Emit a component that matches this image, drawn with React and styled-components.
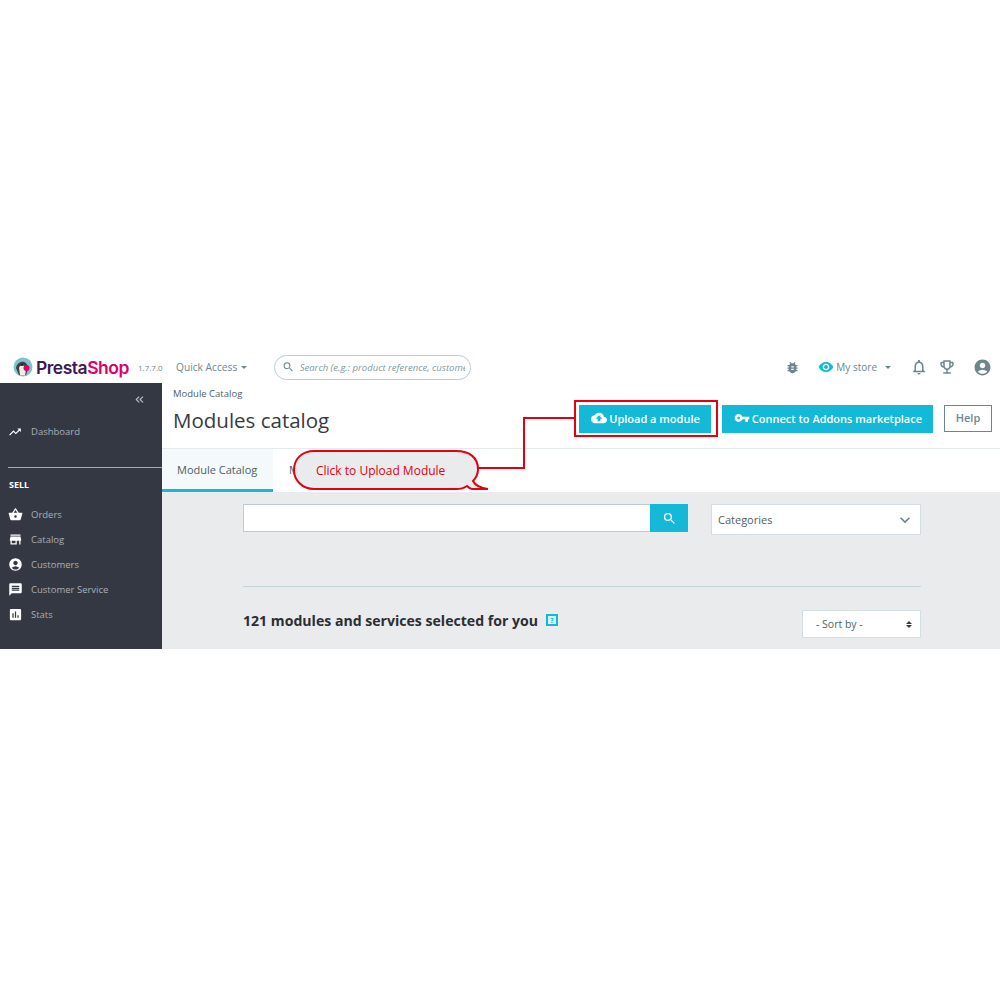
import React from 'react';
import styled, { createGlobalStyle } from 'styled-components';
import {
  MdAccountCircle,
  MdAssessment,
  MdBugReport,
  MdCloudUpload,
  MdExpandMore,
  MdMessage,
  MdNotificationsNone,
  MdOutlineEmojiEvents,
  MdSearch,
  MdShoppingBasket,
  MdStore,
  MdTrendingUp,
  MdVisibility,
  MdVpnKey,
} from 'react-icons/md';
import { ChevronsLeft } from 'lucide-react';

const GlobalStyle = createGlobalStyle`
  html, body {
    margin: 0;
    background: #fff;
    font-family: "Open Sans", "Liberation Sans", sans-serif;
  }
  * { box-sizing: border-box; }
`;

const Page = styled.div`
  position: relative;
  width: 1000px;
  height: 1000px;
  padding-top: 354px;
  overflow: hidden;
`;

const TopBar = styled.header`
  display: flex;
  align-items: center;
  height: 29px;
  padding: 0 8px 3px 13px;
`;

const Logo = styled.div`
  display: flex;
  align-items: center;
  width: 125px;
`;

const LogoName = styled.span`
  margin-left: 3px;
  font-family: "Inter", "Open Sans", sans-serif;
  font-size: 17.5px;
  font-weight: 600;
  letter-spacing: -0.5px;
  color: #3b1a5c;

  b {
    font-weight: 600;
    color: #df0067;
  }
`;

const Version = styled.span`
  width: 38px;
  font-size: 8px;
  color: #6c868e;
`;

const QuickAccess = styled.span`
  display: flex;
  align-items: center;
  width: 98px;
  font-size: 10.2px;
  color: #6c868e;
`;

const Caret = styled.i`
  width: 0;
  height: 0;
  margin-left: ${(p) => p.$gap || 4}px;
  border-top: 3px solid #6c868e;
  border-left: 3.5px solid transparent;
  border-right: 3.5px solid transparent;
`;

const SearchPill = styled.div`
  display: flex;
  align-items: center;
  gap: 5px;
  width: 197px;
  height: 25px;
  padding: 0 5px 0 7px;
  border: 1px solid #bbcdd2;
  border-radius: 13px;
  color: #6c868e;
  overflow: hidden;
`;

const SearchHint = styled.span`
  font-size: 9.5px;
  font-style: italic;
  white-space: nowrap;
  overflow: hidden;
  color: #7f979e;
`;

const TopRight = styled.div`
  display: flex;
  align-items: center;
  margin-left: auto;
  color: #6c868e;
`;

const StoreLink = styled.span`
  display: flex;
  align-items: center;
  gap: 2px;
  margin: 0 19px 0 18px;
  font-size: 10px;
  color: #6c868e;
`;

const TopIcon = styled.span`
  display: flex;
  margin-left: ${(p) => p.$gap || 0}px;
  color: ${(p) => p.$color || '#6c868e'};
`;

const Body = styled.div`
  display: flex;
  height: 266px;
`;

const Sidebar = styled.aside`
  flex: 0 0 162px;
  padding-top: 10px;
  background: #343843;
  color: #bebebe;
`;

const Collapse = styled.div`
  display: flex;
  justify-content: flex-end;
  height: 14px;
  padding-right: 16px;
  color: #bebebe;
`;

const NavList = styled.nav`
  display: flex;
  flex-direction: column;
  gap: 10px;
`;

const NavItem = styled.a`
  display: flex;
  align-items: center;
  gap: 8px;
  height: 15px;
  padding-left: 8px;
  font-size: 9.5px;
  color: #a9afb6;

  svg {
    flex: none;
    color: #fff;
  }
`;

const DashboardItem = styled(NavItem)`
  gap: 9px;
  margin-top: 17px;
`;

const SideRule = styled.hr`
  height: 1px;
  margin: 28px 0 0 8px;
  border: 0;
  background: #a3abb0;
`;

const SideTitle = styled.h4`
  margin: 11px 0 16px 9px;
  font-size: 9px;
  line-height: 12px;
  font-weight: 700;
  color: #fff;
`;

const Main = styled.main`
  flex: 1;
  display: flex;
  flex-direction: column;
  min-width: 0;
`;

const PageHead = styled.div`
  display: flex;
  justify-content: space-between;
  height: 66px;
  padding: 4px 8px 0 11px;
  border-bottom: 1px solid #e5eaec;
`;

const Breadcrumb = styled.div`
  font-size: 9.5px;
  line-height: 13px;
  color: #4d5f66;
`;

const Title = styled.h1`
  margin: 5px 0 0;
  font-size: 20.5px;
  line-height: 30px;
  font-weight: 400;
  color: #363a41;
`;

const Actions = styled.div`
  display: flex;
  gap: 11px;
  padding-top: 18px;
`;

const Button = styled.button`
  display: flex;
  align-items: center;
  gap: 2px;
  height: 28px;
  padding: 0 11px 2px 12px;
  border: 0;
  background: #14b9d7;
  color: #fff;
  font-family: inherit;
  font-size: 11px;
  font-weight: 600;
`;

const HelpButton = styled.button`
  width: 48px;
  height: 27px;
  padding: 0 0 2px;
  border: 1px solid #6c868e;
  background: #fff;
  color: #6c868e;
  font-family: inherit;
  font-size: 11px;
  font-weight: 600;
`;

const Tabs = styled.div`
  display: flex;
  height: 43px;
`;

const Tab = styled.div`
  display: flex;
  align-items: center;
  width: 111px;
  padding-left: ${(p) => (p.$active ? 15 : 16)}px;
  border-bottom: 3px solid ${(p) => (p.$active ? '#14b9d7' : 'transparent')};
  background: ${(p) => (p.$active ? '#f4f9fb' : '#fff')};
  font-size: 11px;
  white-space: nowrap;
  color: #4d5f66;
`;

const Content = styled.section`
  flex: 1;
  padding: 12px 79px 0 81px;
  background: #eaebec;
`;

const FilterRow = styled.div`
  display: flex;
  align-items: flex-start;
`;

const SearchInput = styled.div`
  width: 407px;
  height: 28px;
  border: 1px solid #bbcdd2;
  border-right: 0;
  background: #fff;
`;

const SearchButton = styled.div`
  display: flex;
  align-items: center;
  justify-content: center;
  width: 38px;
  height: 28px;
  background: #14b9d7;
  color: #fff;
`;

const Select = styled.div`
  display: flex;
  align-items: center;
  justify-content: space-between;
  width: ${(p) => p.$width}px;
  height: ${(p) => p.$height}px;
  margin-left: ${(p) => p.$gap || 0}px;
  padding: 0 ${(p) => p.$padRight}px 0 ${(p) => p.$padLeft}px;
  border: 1px solid #d3dee2;
  background: #fff;
  font-size: ${(p) => p.$size || 11}px;
  color: #4d5f66;
`;

const Divider = styled.hr`
  height: 1px;
  margin: 51px 0 0;
  border: 0;
  background: #c5d5d8;
`;

const ResultRow = styled.div`
  display: flex;
  align-items: center;
  justify-content: space-between;
  margin-top: 23px;
`;

const ResultTitle = styled.h2`
  display: flex;
  align-items: center;
  gap: 8px;
  margin: 0;
  padding-bottom: 8px;
  font-size: 14.1px;
  font-weight: 700;
  color: #2b2e33;
`;

const HelpBadge = styled.span`
  display: flex;
  align-items: center;
  justify-content: center;
  width: 12px;
  height: 12px;
  border: 2px solid #14b9d7;
  background: #d9f3f8;
  font-size: 7px;
  font-weight: 700;
  color: #14b9d7;
`;

const SortArrows = styled.span`
  display: flex;
  flex-direction: column;
  gap: 1px;

  i {
    width: 0;
    height: 0;
    border-left: 3px solid transparent;
    border-right: 3px solid transparent;
  }

  i:first-child { border-bottom: 3px solid #363a41; }
  i:last-child { border-top: 3px solid #363a41; }
`;

/* annotation layer drawn over the screenshot */
const UploadHighlight = styled.div`
  position: absolute;
  left: 574px;
  top: 400px;
  width: 144px;
  height: 37px;
  border: 2px solid #e3000f;
`;

const Connector = styled.svg`
  position: absolute;
  left: 470px;
  top: 410px;
  width: 110px;
  height: 70px;
`;

const BubbleShape = styled.svg`
  position: absolute;
  left: 290px;
  top: 446px;
  width: 204px;
  height: 48px;
`;

const BubbleText = styled.span`
  position: absolute;
  left: 316px;
  top: 462px;
  font-family: "Open Sans", sans-serif;
  font-size: 12px;
  line-height: 18px;
  color: #e3000f;
`;

const Puffin = () => (
  <svg width="20" height="20" viewBox="0 0 20 20">
    <circle cx="10" cy="10" r="9.5" fill="#7fc4c9" />
    <path d="M3 11c1-5 5-7 8-6 3 1 4 4 4 7l-2 6H6z" fill="#3b3f4a" />
    <path d="M6 11c1-3 4-3 6-1 1 2 1 5 0 8H7z" fill="#f3efe6" />
    <circle cx="13.5" cy="11" r="3" fill="#df0067" />
    <circle cx="9" cy="8" r="1" fill="#222" />
  </svg>
);

const navItems = [
  { label: 'Orders', Icon: MdShoppingBasket },
  { label: 'Catalog', Icon: MdStore },
  { label: 'Customers', Icon: MdAccountCircle },
  { label: 'Customer Service', Icon: MdMessage },
  { label: 'Stats', Icon: MdAssessment },
];

const App = () => {
  return (
    <Page>
      <GlobalStyle />
      <TopBar>
        <Logo>
          <Puffin />
          <LogoName>
            Presta<b>Shop</b>
          </LogoName>
        </Logo>
        <Version>1.7.7.0</Version>
        <QuickAccess>
          Quick Access <Caret />
        </QuickAccess>
        <SearchPill>
          <MdSearch size={16} />
          <SearchHint>Search (e.g.: product reference, customer name…)</SearchHint>
        </SearchPill>
        <TopRight>
          <TopIcon>
            <MdBugReport size={15} />
          </TopIcon>
          <StoreLink>
            <TopIcon $color="#14b9d7">
              <MdVisibility size={16} />
            </TopIcon>
            My store
            <Caret $gap={6} />
          </StoreLink>
          <TopIcon>
            <MdNotificationsNone size={18} />
          </TopIcon>
          <TopIcon $gap={10}>
            <MdOutlineEmojiEvents size={18} />
          </TopIcon>
          <TopIcon $gap={17}>
            <MdAccountCircle size={19} />
          </TopIcon>
        </TopRight>
      </TopBar>
      <Body>
        <Sidebar>
          <Collapse>
            <ChevronsLeft size={13} />
          </Collapse>
          <DashboardItem>
            <MdTrendingUp size={14} />
            Dashboard
          </DashboardItem>
          <SideRule />
          <SideTitle>SELL</SideTitle>
          <NavList>
            {navItems.map(({ label, Icon }) => (
              <NavItem key={label}>
                <Icon size={15} />
                {label}
              </NavItem>
            ))}
          </NavList>
        </Sidebar>
        <Main>
          <PageHead>
            <div>
              <Breadcrumb>Module Catalog</Breadcrumb>
              <Title>Modules catalog</Title>
            </div>
            <Actions>
              <Button>
                <MdCloudUpload size={16} />
                Upload a module
              </Button>
              <Button>
                <MdVpnKey size={16} />
                Connect to Addons marketplace
              </Button>
              <HelpButton>Help</HelpButton>
            </Actions>
          </PageHead>
          <Tabs>
            <Tab $active>Module Catalog</Tab>
            <Tab>Modules in your store</Tab>
          </Tabs>
          <Content>
            <FilterRow>
              <SearchInput />
              <SearchButton>
                <MdSearch size={15} />
              </SearchButton>
              <Select $width={210} $height={31} $gap={23} $padLeft={6} $padRight={5}>
                Categories
                <MdExpandMore size={20} color="#6c868e" />
              </Select>
            </FilterRow>
            <Divider />
            <ResultRow>
              <ResultTitle>
                121 modules and services selected for you
                <HelpBadge>?</HelpBadge>
              </ResultTitle>
              <Select $width={119} $height={28} $padLeft={13} $padRight={8} $size={10.5}>
                - Sort by -
                <SortArrows>
                  <i />
                  <i />
                </SortArrows>
              </Select>
            </ResultRow>
          </Content>
        </Main>
      </Body>

      <UploadHighlight />
      <Connector viewBox="0 0 110 70">
        <path d="M6 58H54V8H106" fill="none" stroke="#e3000f" strokeWidth="2" />
      </Connector>
      <BubbleShape viewBox="0 0 204 48">
        <path
          d="M24 5H166C180 5 188 12 188 23C188 28 186 32 183 35C185 39 191 42 198 43H182C180 43 178 41 177 40C174 42 171 43 166 43H24C12 43 4 34 4 24C4 13 12 5 24 5Z"
          fill="#eaebec"
          stroke="#e3000f"
          strokeWidth="2"
        />
      </BubbleShape>
      <BubbleText>Click to Upload Module</BubbleText>
    </Page>
  );
};

export default App;
